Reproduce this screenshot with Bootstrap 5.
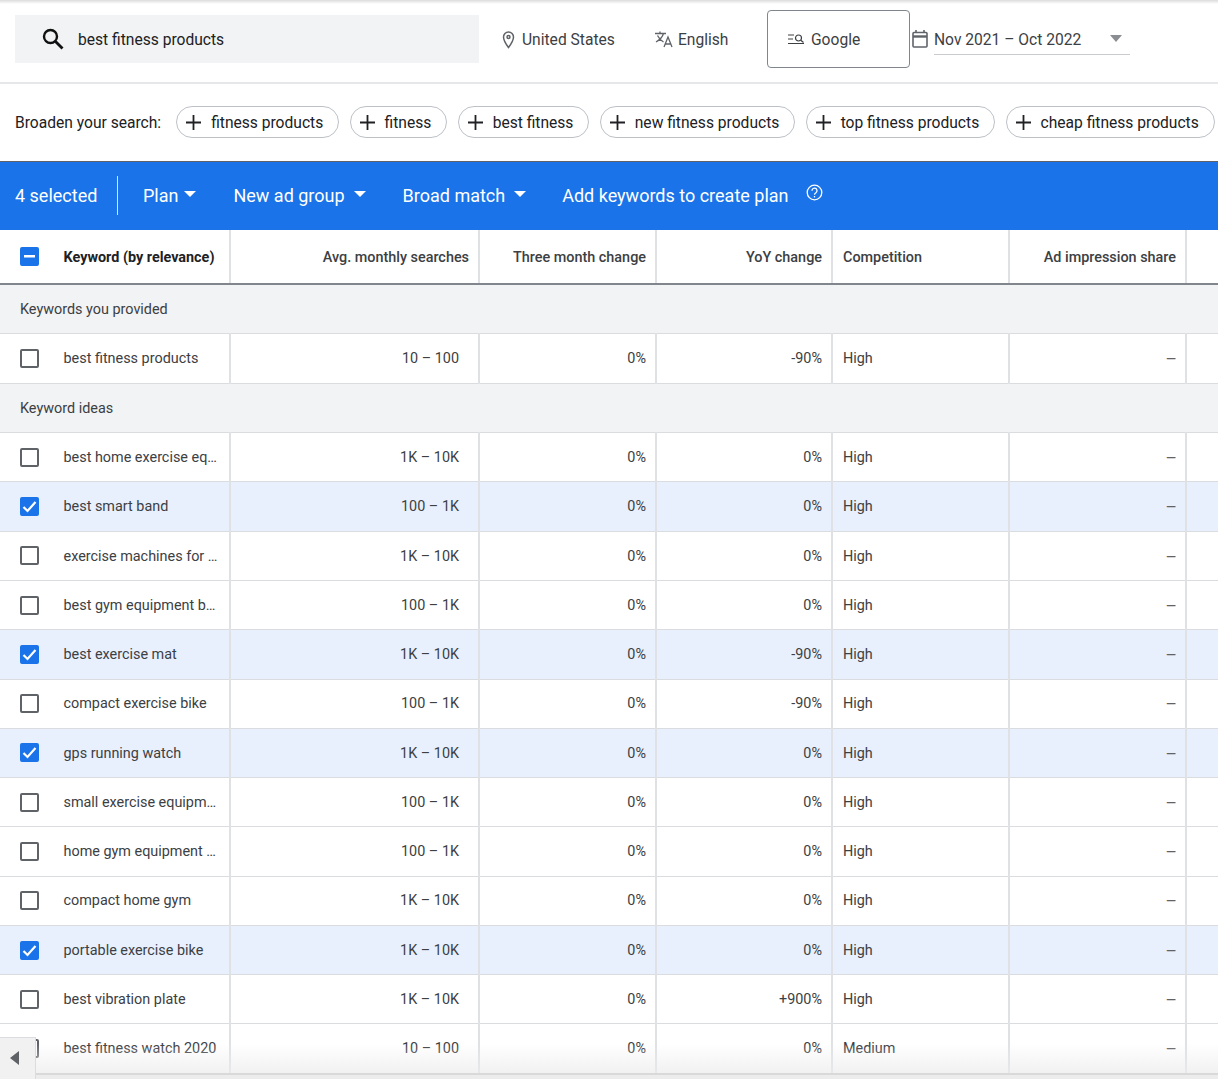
<!doctype html>
<html lang="en"><head><meta charset="utf-8"><title>Keyword ideas</title>
<link href="https://cdn.jsdelivr.net/npm/bootstrap@5.3.0/dist/css/bootstrap.min.css" rel="stylesheet">
<style>
html,body{height:1079px;overflow:hidden}
body{font-family:Roboto,"Liberation Sans",sans-serif;color:#3c4043;font-size:14.4px;position:relative;background:#fff}
.page-shadow{position:absolute;left:0;right:0;top:0;height:4px;background:linear-gradient(#dcdcdc,#fff)}
.topbar{height:84px;border-bottom:2px solid #e6e7e8;padding:10px 0 0 15px;color:#3c4043;font-size:15.6px}
.topbar span{position:relative;top:2px}
.searchbox{width:464px;height:48px;margin-top:5px;background:#f1f3f4;padding-left:26px;gap:13px;color:#202124;flex:none}
.meta{height:58px}
.loc{margin-left:21px;width:154px;gap:5px}
.lang{width:113px;gap:4px}
.net{width:143px;height:58px;border:1px solid #80868b;border-radius:4px;padding-left:20px;gap:6px}
.datebox{margin-left:2px;gap:4px;height:58px}
.daterange{width:196px;height:30px;margin-top:1px;border-bottom:1px solid #c9cbce;padding-right:8px}
.caret-grey{width:0;height:0;border-left:6.5px solid transparent;border-right:6.5px solid transparent;border-top:7px solid #8a8d91;margin-top:-2px}
.broaden{height:77px;padding:0 0 1px 15px;font-size:15.6px;color:#202124;white-space:nowrap;overflow:hidden}
.broaden span{position:relative;top:2px}
.chip{height:32px;border:1px solid #bdc1c6;border-radius:16px;padding:0 15px 0 8px;margin-left:10.35px;gap:9px;flex:none;color:#202124;background:#fff}
.chip:first-of-type{margin-left:15px}
.actionbar{height:69px;background:#1a73e8;border-top:1px solid #5f6368;color:#fff;font-size:18px;padding-left:15px;white-space:nowrap;border-bottom:1px solid #1a73e8}
.actionbar .sel{width:102px}
.divider{width:1px;height:39px;background:#d5e4fb;margin-right:25px}
.menu{gap:9px;margin-right:37px}
.menu.plan{gap:6px}
.menu.broad{margin-right:36px}
.caret-w{width:0;height:0;border-left:6.5px solid transparent;border-right:6.5px solid transparent;border-top:6px solid #fff;margin-top:-3px}
.help{margin-bottom:6px;margin-left:17px}
.kw{table-layout:fixed;width:1218px;margin:0;border-collapse:collapse;color:#3c4043;font-size:14.4px}
.kw th,.kw td{padding:1px 9px 0 10px;vertical-align:middle;border-right:2px solid #dfe1e5;border-bottom:1px solid #dadce0;white-space:nowrap;overflow:hidden;font-weight:400;background:transparent;box-shadow:none;color:#3c4043}
.kw thead th{height:54px;padding-top:2px;font-weight:500;border-bottom:2px solid #80868b;color:#3c4043}
.kw thead th:first-child{font-weight:700;color:#202124}
.kw tbody td{height:49.28px}
.kw tbody tr.first td{height:50.2px}
.kw .kwcell{padding:1px 8px 0 20px}
.kw thead .kwcell{padding:2px 8px 0 20px}
.kw .kwcell>div{gap:24.5px}
.kw .kwcell span{display:block}
.kw .group td{background:#f1f3f4;border-right:0;padding-left:20px}
.kw tr.on td{background:#e8f0fe}
.kw td:last-child,.kw th:last-child{border-right:0}
.kw .vol{padding-right:19px}
.box{width:19px;height:19px;flex:none;border:2px solid #5f6368;border-radius:2px;background:#fff;margin-top:-1px}
.box.on{background:#1a73e8;border-color:#1a73e8}
.box svg{display:block}
.kw td.dash{color:#5f6368;font-size:13px;font-weight:500}
.fade-bottom{position:absolute;left:0;right:0;top:1044px;height:29px;background:linear-gradient(rgba(235,235,235,0),rgba(235,235,235,.7));pointer-events:none}
.fade-foot{position:absolute;left:0;right:0;top:1073px;height:6px;background:#ececec;border-top:2px solid #d9d9d9}
.scroller{position:absolute;left:0;top:1037px;width:36px;height:42px;background:#f1f1f1;border:1px solid #dadce0;border-left:0;border-bottom:0}
.scroller i{position:absolute;left:10px;top:13px;border-top:7.5px solid transparent;border-bottom:7.5px solid transparent;border-right:9px solid #5f6368}
</style></head><body>
<div class="page-shadow"></div>
<div class="topbar d-flex align-items-start">
  <div class="searchbox d-flex align-items-center">
    <svg width="24" height="24" viewBox="0 0 24 24" fill="none" stroke="#111" stroke-width="2.4"><circle cx="9.5" cy="9.5" r="6.5"/><path d="M14.5 14.5 21.5 21.5" stroke-width="2.8"/></svg>
    <span>best fitness products</span>
  </div>
  <div class="meta loc d-flex align-items-center"><svg width="17" height="20" viewBox="0 0 17 20" fill="none" stroke="#5f6368" stroke-width="1.5"><path d="M8.5 18.5C5.5 14.5 3.5 11.5 3.5 8a5 5 0 0 1 10 0c0 3.500-2 6.500-5 10.500Z"/><circle cx="8.500" cy="8" r="1.500"/></svg><span>United States</span></div>
  <div class="meta lang d-flex align-items-center"><svg width="20" height="20" viewBox="0 0 20 20" fill="none" stroke="#5f6368" stroke-width="1.300"><path d="M1 4.500h11M6 2.500v2M9.500 4.500C8.500 8 5.500 11 2 13M3.500 6.500c1.500 3 3.500 5 6 6.500M10 18l4-10 4 10M11.500 15h5"/></svg><span>English</span></div>
  <div class="net d-flex align-items-center"><svg width="17" height="11" viewBox="0 0 17 11" fill="none" stroke="#3c4043" stroke-width="1.200"><path d="M0 1h6M0 5h5M0 9.500h16"/><circle cx="10.500" cy="4" r="3"/><path d="M12.800 6.200 15.500 8.500"/></svg><span>Google</span></div>
  <div class="datebox d-flex align-items-center"><svg width="18" height="20" viewBox="0 0 18 20" fill="none" stroke="#5f6368" stroke-width="1.600"><rect x="1" y="3.500" width="14" height="14.500" rx="1"/><path d="M1 7.500h14" stroke-width="2.400"/><path d="M4 1v3M12 1v3"/></svg>
    <div class="daterange d-flex justify-content-between align-items-center"><span>Nov 2021 – Oct 2022</span><i class="caret-grey"></i></div></div>
</div>
<div class="broaden d-flex align-items-center">
  <span>Broaden your search:</span>
  <div class="chip d-flex align-items-center"><svg width="17" height="17" viewBox="0 0 17 17" stroke="#202124" stroke-width="1.800"><path d="M8.500 1v15M1 8.500h15"/></svg><span>fitness products</span></div>
  <div class="chip d-flex align-items-center"><svg width="17" height="17" viewBox="0 0 17 17" stroke="#202124" stroke-width="1.800"><path d="M8.500 1v15M1 8.500h15"/></svg><span>fitness</span></div>
  <div class="chip d-flex align-items-center"><svg width="17" height="17" viewBox="0 0 17 17" stroke="#202124" stroke-width="1.800"><path d="M8.500 1v15M1 8.500h15"/></svg><span>best fitness</span></div>
  <div class="chip d-flex align-items-center"><svg width="17" height="17" viewBox="0 0 17 17" stroke="#202124" stroke-width="1.800"><path d="M8.500 1v15M1 8.500h15"/></svg><span>new fitness products</span></div>
  <div class="chip d-flex align-items-center"><svg width="17" height="17" viewBox="0 0 17 17" stroke="#202124" stroke-width="1.800"><path d="M8.500 1v15M1 8.500h15"/></svg><span>top fitness products</span></div>
  <div class="chip d-flex align-items-center"><svg width="17" height="17" viewBox="0 0 17 17" stroke="#202124" stroke-width="1.800"><path d="M8.500 1v15M1 8.500h15"/></svg><span>cheap fitness products</span></div>
</div>
<div class="actionbar d-flex align-items-center">
  <span class="sel">4 selected</span><span class="divider"></span>
  <div class="menu plan d-flex align-items-center"><span>Plan</span><i class="caret-w"></i></div>
  <div class="menu d-flex align-items-center"><span>New ad group</span><i class="caret-w"></i></div>
  <div class="menu broad d-flex align-items-center"><span>Broad match</span><i class="caret-w"></i></div>
  <span>Add keywords to create plan</span>
  <svg class="help" width="17" height="17" viewBox="0 0 17 17" fill="none" stroke="#fff" stroke-width="1.300"><circle cx="8.500" cy="8.500" r="7.300"/><path d="M6 6.700a2.500 2.500 0 1 1 3.900 2c-.9.600-1.400 1-1.400 2"/><path d="M8.500 12v1.400"/></svg>
</div>
<table class="table kw"><colgroup><col style="width:230px"><col style="width:249px"><col style="width:177px"><col style="width:176px"><col style="width:177px"><col style="width:177px"><col></colgroup>
<thead><tr><th class="kwcell"><div class="d-flex align-items-center"><span class="box on d-flex align-items-center justify-content-center"><svg width="11" height="3"><rect width="11" height="2.500" fill="#fff"/></svg></span><span>Keyword (by relevance)</span></div></th><th class="text-end">Avg. monthly searches</th><th class="text-end">Three month change</th><th class="text-end">YoY change</th><th>Competition</th><th class="text-end">Ad impression share</th><th></th></tr></thead>
<tbody id="rows"></tbody></table>
<div class="fade-bottom"></div><div class="fade-foot"></div>
<div class="scroller"><i></i></div>
<script>
const data=[["g","Keywords you provided"],["best fitness products","10 – 100","-90%","High",0,"first"],["g","Keyword ideas"],
["best home exercise eq…","1K – 10K","0%","High",0],["best smart band","100 – 1K","0%","High",1],["exercise machines for …","1K – 10K","0%","High",0],["best gym equipment b…","100 – 1K","0%","High",0],["best exercise mat","1K – 10K","-90%","High",1],["compact exercise bike","100 – 1K","-90%","High",0],["gps running watch","1K – 10K","0%","High",1],["small exercise equipm…","100 – 1K","0%","High",0],["home gym equipment …","100 – 1K","0%","High",0],["compact home gym","1K – 10K","0%","High",0],["portable exercise bike","1K – 10K","0%","High",1],["best vibration plate","1K – 10K","+900%","High",0],["best fitness watch 2020","10 – 100","0%","Medium",0],["","","","",0]];
const check='<svg width="15" height="15" viewBox="0 0 15 15" fill="none" stroke="#fff" stroke-width="2.200"><path d="M1.500 8 5.500 12 13.500 3"/></svg>';
document.getElementById('rows').innerHTML=data.map(r=>{
 if(r[0]==='g')return `<tr class="group"><td colspan="7">${r[1]}</td></tr>`;
 if(!r[0])return '<tr><td></td><td></td><td></td><td></td><td></td><td></td><td></td></tr>';
 return `<tr class="${r[4]?'on':''} ${r[5]||''}"><td class="kwcell"><div class="d-flex align-items-center"><span class="box ${r[4]?'on d-flex align-items-center justify-content-center':''}">${r[4]?check:''}</span><span>${r[0]}</span></div></td><td class="text-end vol">${r[1]}</td><td class="text-end">0%</td><td class="text-end">${r[2]}</td><td>${r[3]}</td><td class="text-end dash">—</td><td></td></tr>`;}).join('');
</script>
<script src="https://cdn.jsdelivr.net/npm/bootstrap@5.3.0/dist/js/bootstrap.bundle.min.js"></script>
</body></html>
